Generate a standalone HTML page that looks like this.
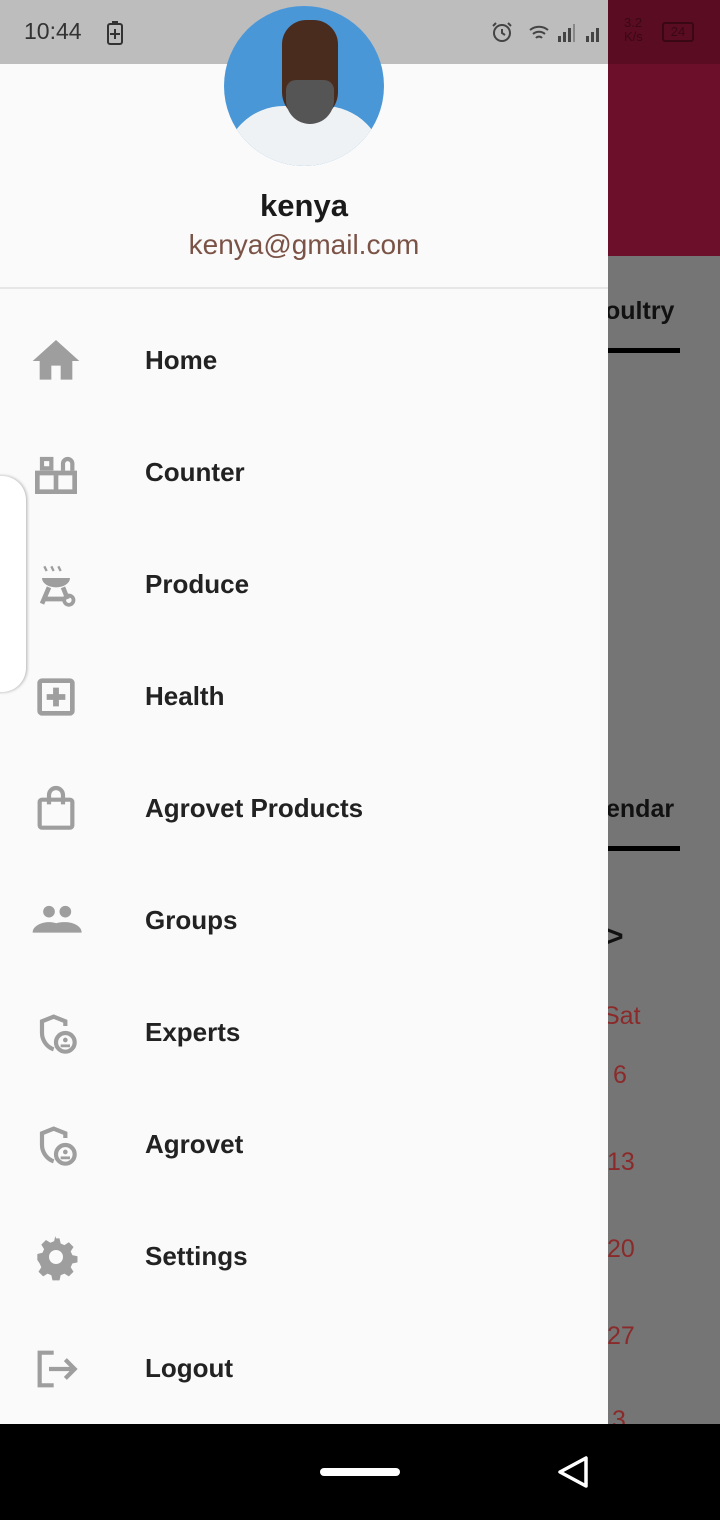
<!DOCTYPE html>
<html><head><meta charset="utf-8"><style>
*{margin:0;padding:0;box-sizing:border-box}
body{width:720px;height:1520px;position:relative;overflow:hidden;background:#757575;font-family:"Liberation Sans",sans-serif}
.abs{position:absolute}
.item{position:absolute;left:0;width:608px;height:112px}
.item svg{position:absolute;left:28px;top:-3px;width:56px;height:56px}
.item span{position:absolute;left:145px;font-size:26px;font-weight:bold;color:#222;line-height:30px}
.rt{position:absolute;color:#111;font-weight:bold;font-size:25px}
.red{position:absolute;color:#8b2a2a;font-size:25px}
</style></head><body>
<div class="abs" style="left:608px;top:0;width:112px;height:64px;background:#5a0c22"></div>
<div class="abs" style="left:608px;top:64px;width:112px;height:192px;background:#6b0f2b"></div>
<div class="rt" style="left:605px;top:297px">oultry</div>
<div class="abs" style="left:608px;top:348px;width:72px;height:5px;background:#000"></div>
<div class="rt" style="left:606px;top:795px">endar</div>
<div class="abs" style="left:608px;top:846px;width:72px;height:5px;background:#000"></div>
<div class="rt" style="left:606px;top:920px;font-size:30px">&gt;</div>
<div class="red" style="left:603px;top:1002px">Sat</div>
<div class="red" style="left:613px;top:1061px">6</div>
<div class="red" style="left:607px;top:1148px">13</div>
<div class="red" style="left:607px;top:1235px">20</div>
<div class="red" style="left:607px;top:1322px">27</div>
<div class="red" style="left:612px;top:1406px">3</div>

<div class="abs" style="left:0;top:0;width:608px;height:1424px;background:#fafafa"></div>
<div class="abs" style="left:0;top:0;width:608px;height:64px;background:#bdbdbd"></div>
<div class="abs" style="left:24px;top:18px;font-size:23px;color:#333">10:44</div>
<svg class="abs" style="left:106px;top:20px" width="20" height="26" viewBox="0 0 20 26"><rect x="2" y="4" width="14" height="20" rx="2" fill="none" stroke="#333" stroke-width="2"/><rect x="6" y="1" width="6" height="3" fill="#333"/><path d="M9 9v10M4 14h10" stroke="#333" stroke-width="2"/></svg>
<svg class="abs" style="left:490px;top:20px" width="24" height="24" viewBox="0 0 24 24"><circle cx="12" cy="13" r="8" stroke="#444" stroke-width="2" fill="none"/><path d="M12 9v4l3 2M3 6l3-3M21 6l-3-3" stroke="#444" stroke-width="2" fill="none"/></svg>
<svg class="abs" style="left:528px;top:22px" width="80" height="22" viewBox="0 0 80 22"><path d="M2 8a14 14 0 0 1 18 0M5 12a9 9 0 0 1 12 0M8 16a4 4 0 0 1 6 0" stroke="#444" stroke-width="2" fill="none"/><rect x="30" y="14" width="3" height="6" fill="#444"/><rect x="35" y="10" width="3" height="10" fill="#444"/><rect x="40" y="6" width="3" height="14" fill="#444"/><rect x="45" y="2" width="2" height="18" fill="#888"/><rect x="58" y="14" width="3" height="6" fill="#444"/><rect x="63" y="10" width="3" height="10" fill="#444"/><rect x="68" y="6" width="3" height="14" fill="#444"/></svg>
<div class="abs" style="left:624px;top:16px;font-size:13px;line-height:14px;color:#3a0815">3.2<br>K/s</div>
<div class="abs" style="left:662px;top:22px;width:32px;height:20px;border:2px solid #3a0815;border-radius:3px;font-size:13px;color:#3a0815;text-align:center;line-height:16px">24</div>

<div class="abs" style="left:224px;top:6px;width:160px;height:160px;border-radius:50%;overflow:hidden;background:#4a97d8">
<div class="abs" style="left:0;top:100px;width:160px;height:70px;background:#eef2f4;border-radius:60px 60px 0 0"></div>
<div class="abs" style="left:58px;top:14px;width:56px;height:100px;border-radius:26px 26px 30px 30px;background:#4a2c1f"></div>
<div class="abs" style="left:62px;top:74px;width:48px;height:44px;border-radius:10px 10px 24px 24px;background:#555"></div>
</div>
<div class="abs" style="left:0;top:188px;width:608px;text-align:center;font-size:31px;font-weight:bold;color:#1a1a1a">kenya</div>
<div class="abs" style="left:0;top:229px;width:608px;text-align:center;font-size:28px;color:#7b5346">kenya@gmail.com</div>
<div class="abs" style="left:0;top:287px;width:608px;height:2px;background:#e6e6e6"></div>

<div class="abs" style="left:-10px;top:476px;width:36px;height:216px;background:#fff;border-radius:0 24px 24px 0;box-shadow:1px 0 3px rgba(0,0,0,.3)"></div>

<div class="item" style="top:336px"><svg viewBox="0 0 24 24"><path d="M10 20v-6h4v6h5v-8h3L12 3 2 12h3v8z" fill="#9e9e9e"/></svg><span style="top:9px">Home</span></div>
<div class="item" style="top:448px"><svg viewBox="0 0 24 24"><path d="M4 12h16v8H4zM12 12v8M4 12v-1M20 12v-1M3 12h18" stroke="#9e9e9e" stroke-width="2" fill="none"/><rect x="6" y="6" width="4" height="4" fill="none" stroke="#9e9e9e" stroke-width="1.8"/><path d="M15 11V8a2 2 0 0 1 4 0v3" stroke="#9e9e9e" stroke-width="1.8" fill="none"/></svg><span style="top:9px">Counter</span></div>
<div class="item" style="top:560px"><svg viewBox="0 0 24 24"><path d="M7 4l1 2M10 4l1 2M13 4l1 2" stroke="#9e9e9e" stroke-width="1"/><path d="M6 9h12a6 4 0 0 1-12 0z" fill="#9e9e9e"/><path d="M9 13l-3 7M15 13l2 5M7 18h8" stroke="#9e9e9e" stroke-width="2" fill="none"/><circle cx="17.5" cy="18.5" r="2" stroke="#9e9e9e" stroke-width="1.6" fill="none"/></svg><span style="top:9px">Produce</span></div>
<div class="item" style="top:672px"><svg viewBox="0 0 24 24"><rect x="5" y="5" width="14" height="14" rx="1" stroke="#9e9e9e" stroke-width="2" fill="none"/><path d="M12 8v8M8 12h8" stroke="#9e9e9e" stroke-width="2.5"/></svg><span style="top:9px">Health</span></div>
<div class="item" style="top:784px"><svg viewBox="0 0 24 24"><rect x="5" y="8" width="14" height="12" rx="1" stroke="#9e9e9e" stroke-width="1.8" fill="none"/><path d="M9 10V6a3 3 0 0 1 6 0v4" stroke="#9e9e9e" stroke-width="1.8" fill="none"/></svg><span style="top:9px">Agrovet Products</span></div>
<div class="item" style="top:896px"><svg viewBox="0 0 24 24"><circle cx="9" cy="8" r="2.5" fill="#9e9e9e"/><circle cx="16" cy="8" r="2.5" fill="#9e9e9e"/><path d="M2 17c0-3 4-4.5 7-4.5s7 1.5 7 4.5zM14 17c0-2-1-3-2-4 1-.4 2.5-.5 4-.5 3 0 7 1.5 7 4.5z" fill="#9e9e9e"/></svg><span style="top:9px">Groups</span></div>
<div class="item" style="top:1008px"><svg viewBox="0 0 24 24"><path d="M11 19c-3-1-5-4-5-7V7l5-2 5 2v2" stroke="#9e9e9e" stroke-width="1.8" fill="none"/><circle cx="16" cy="16" r="4" stroke="#9e9e9e" stroke-width="1.8" fill="none"/><circle cx="16" cy="15" r="1" fill="#9e9e9e"/><path d="M14 17.5h4" stroke="#9e9e9e" stroke-width="1.2"/></svg><span style="top:9px">Experts</span></div>
<div class="item" style="top:1120px"><svg viewBox="0 0 24 24"><path d="M11 19c-3-1-5-4-5-7V7l5-2 5 2v2" stroke="#9e9e9e" stroke-width="1.8" fill="none"/><circle cx="16" cy="16" r="4" stroke="#9e9e9e" stroke-width="1.8" fill="none"/><circle cx="16" cy="15" r="1" fill="#9e9e9e"/><path d="M14 17.5h4" stroke="#9e9e9e" stroke-width="1.2"/></svg><span style="top:9px">Agrovet</span></div>
<div class="item" style="top:1232px"><svg viewBox="0 0 24 24"><path d="M12 4l1.5 0 .5 2.2 1.6.7 1.9-1.2 2 2-1.2 1.9.7 1.6 2.2.5v2.6l-2.2.5-.7 1.6 1.2 1.9-2 2-1.9-1.2-1.6.7-.5 2.2h-3l-.5-2.2-1.6-.7-1.9 1.2-2-2 1.2-1.9-.7-1.6L4 13.3v-2.6l2.2-.5.7-1.6-1.2-1.9 2-2 1.9 1.2 1.6-.7.5-2.2z" fill="#9e9e9e"/><circle cx="12" cy="12" r="3" fill="#fafafa"/></svg><span style="top:9px">Settings</span></div>
<div class="item" style="top:1344px"><svg viewBox="0 0 24 24"><path d="M11 5H5v14h6" stroke="#9e9e9e" stroke-width="1.8" fill="none"/><path d="M9 12h11M16 8l4 4-4 4" stroke="#9e9e9e" stroke-width="1.8" fill="none"/></svg><span style="top:9px">Logout</span></div>

<div class="abs" style="left:0;top:1424px;width:720px;height:96px;background:#000"></div>
<div class="abs" style="left:320px;top:1468px;width:80px;height:8px;border-radius:4px;background:#fff"></div>
<svg class="abs" style="left:556px;top:1454px" width="36" height="36" viewBox="0 0 36 36"><path d="M30 4v28L4 18z" stroke="#fff" stroke-width="3.5" fill="none" stroke-linejoin="round"/></svg>
</body></html>
